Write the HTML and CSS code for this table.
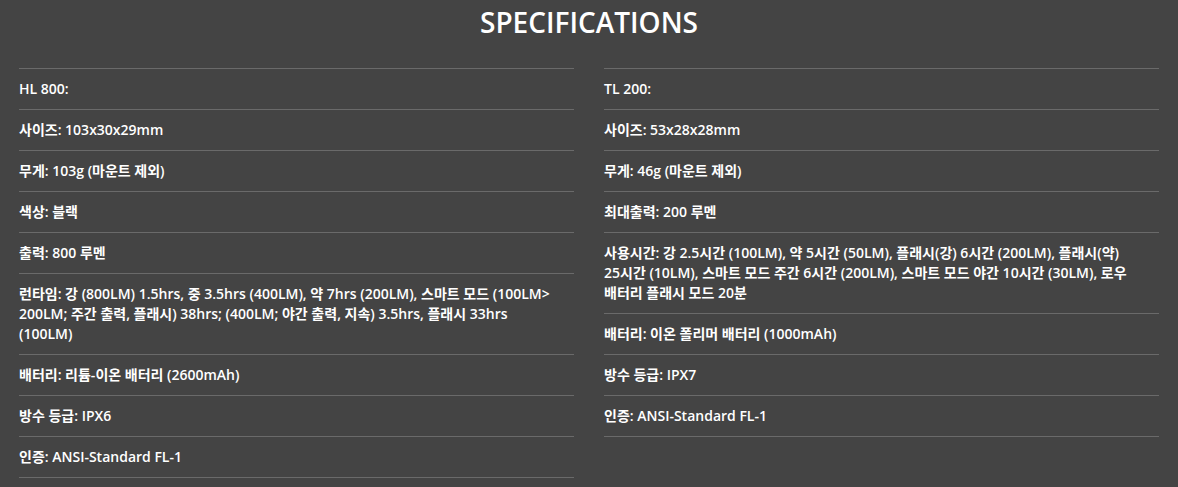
FILE: index.html
```html
<!DOCTYPE html>
<html lang="ko">
<head>
<meta charset="utf-8">
<title>Specifications</title>
<link rel="stylesheet" href="styles.css">
</head>
<body>
<section class="specs">
  <h2 class="specs-title">SPECIFICATIONS</h2>
  <div class="specs-grid">
    <ul class="spec-list">
      <li>HL 800:</li>
      <li>사이즈: 103x30x29mm</li>
      <li>무게: 103g (마운트 제외)</li>
      <li>색상: 블랙</li>
      <li>출력: 800 루멘</li>
      <li>런타임: 강 (800LM) 1.5hrs, 중 3.5hrs (400LM), 약 7hrs (200LM), 스마트 모드 (100LM&gt; 200LM; 주간 출력, 플래시) 38hrs; (400LM; 야간 출력, 지속) 3.5hrs, 플래시 33hrs (100LM)</li>
      <li>배터리: 리튬-이온 배터리 (2600mAh)</li>
      <li>방수 등급: IPX6</li>
      <li>인증: ANSI-Standard FL-1</li>
    </ul>
    <ul class="spec-list">
      <li>TL 200:</li>
      <li>사이즈: 53x28x28mm</li>
      <li>무게: 46g (마운트 제외)</li>
      <li>최대출력: 200 루멘</li>
      <li>사용시간: 강 2.5시간 (100LM), 약 5시간 (50LM), 플래시(강) 6시간 (200LM), 플래시(약) 25시간 (10LM), 스마트 모드 주간 6시간 (200LM), 스마트 모드 야간 10시간 (30LM), 로우 배터리 플래시 모드 20분</li>
      <li>배터리: 이온 폴리머 배터리 (1000mAh)</li>
      <li>방수 등급: IPX7</li>
      <li>인증: ANSI-Standard FL-1</li>
    </ul>
  </div>
</section>
</body>
</html>
```

FILE: styles.css
```css
html, body {
  margin: 0;
  padding: 0;
  background: #444444;
}

body {
  font-family: "Open Sans", "Noto Sans CJK KR", sans-serif;
  color: #ffffff;
}

.specs {
  padding: 0 19px;
}

.specs-title {
  margin: 0;
  padding-top: 3px;
  height: 68px;
  box-sizing: border-box;
  text-align: center;
  font-size: 28px;
  font-weight: 600;
  line-height: 38px;
}

.specs-grid {
  display: grid;
  grid-template-columns: 1fr 1fr;
  column-gap: 30px;
  align-items: start;
}

.spec-list {
  list-style: none;
  margin: 0;
  padding: 0;
  border-top: 1px solid #6a6a6a;
}

.spec-list li {
  padding: 10px 10px 10px 0;
  border-bottom: 1px solid #6a6a6a;
  font-size: 14px;
  font-weight: 600;
  line-height: 20px;
  word-break: keep-all;
}
```
